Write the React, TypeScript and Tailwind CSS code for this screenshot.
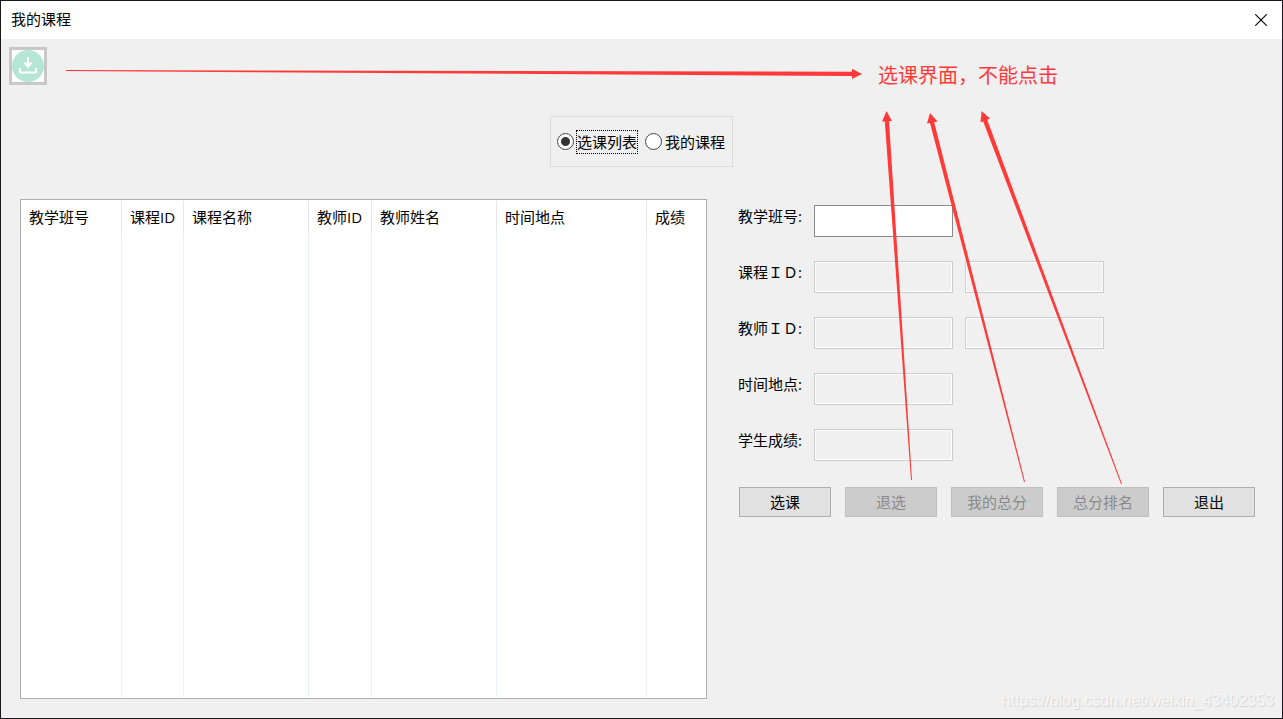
import { useState } from "react";

const columns = [
  { name: "教学班号", col: "w-[101px]" },
  { name: "课程ID", col: "w-[62px]" },
  { name: "课程名称", col: "w-[125px]" },
  { name: "教师ID", col: "w-[63px]" },
  { name: "教师姓名", col: "w-[125px]" },
  { name: "时间地点", col: "w-[150px]" },
  { name: "成绩", col: "" },
];

const fields = [
  { id: "classNo", label: "教学班号:", enabled: true },
  { id: "courseId", label: "课程ＩＤ:", extra: "课程名称" },
  { id: "teacherId", label: "教师ＩＤ:", extra: "教师姓名" },
  { id: "place", label: "时间地点:" },
  { id: "score", label: "学生成绩:" },
];

const actions = [
  { name: "选课", enabled: true },
  { name: "退选", enabled: false },
  { name: "我的总分", enabled: false },
  { name: "总分排名", enabled: false },
  { name: "退出", enabled: true },
];

const inputBase = "h-8 w-[139px] shrink-0 px-1 outline-none border ";
const inputOn = inputBase + "border-[#8a8a8a] bg-white";
const inputOff = inputBase + "border-[#cccccc] bg-[#f0f0f0] inset-ring inset-ring-white";

function TitleBar() {
  return (
    <header className="flex h-[38px] shrink-0 items-center justify-between bg-white pr-[15px] pl-[10px]">
      <h1 className="pb-0.5">我的课程</h1>
      <button type="button" aria-label="关闭" className="size-3">
        <svg viewBox="0 0 12 12" className="size-3" stroke="#000" strokeWidth="1.1">
          <path d="M0.3 0.3L11.7 11.7M11.7 0.3L0.3 11.7" />
        </svg>
      </button>
    </header>
  );
}

function ModeSwitch() {
  const [mode, setMode] = useState("选课列表");
  return (
    <div
      role="radiogroup"
      aria-label="显示内容"
      className="mx-auto mt-[31px] flex h-[51px] items-center gap-[7px] border border-[#dcdcdc] px-[6px]"
    >
      {["选课列表", "我的课程"].map((name) => (
        <label key={name} className="flex items-center gap-[2px]">
          <input
            type="radio"
            name="mode"
            checked={mode === name}
            onChange={() => setMode(name)}
            className="peer size-[17px] appearance-none rounded-full border border-[#444] bg-white checked:bg-[radial-gradient(circle,#333_4px,#fff_5px)]"
          />
          <span className="border border-dotted border-transparent leading-[22px] peer-checked:border-black">
            {name}
          </span>
        </label>
      ))}
    </div>
  );
}

function CourseTable() {
  return (
    <div className="flex min-w-0 flex-1 border border-[#adadb3] bg-white py-px">
      <table className="w-full table-fixed border-separate border-spacing-0 text-left">
        <colgroup>
          {columns.map((c) => (
            <col key={c.name} className={c.col} />
          ))}
        </colgroup>
        <thead>
          <tr>
            {columns.map((c) => (
              <th
                key={c.name}
                className="h-8 border-r border-[#e6e6e6] pl-2 font-normal whitespace-nowrap last:border-r-0"
              >
                {c.name}
              </th>
            ))}
          </tr>
        </thead>
        <tbody>
          <tr className="h-full">
            {columns.map((c) => (
              <td key={c.name} className="border-r border-[#e8f1f9] last:border-r-0" />
            ))}
          </tr>
        </tbody>
      </table>
    </div>
  );
}

function CourseForm() {
  return (
    <form className="shrink-0 pt-[6px]">
      <div className="flex flex-col gap-6">
        {fields.map((f) => (
          <div key={f.id} className="flex">
            <label htmlFor={f.id} className="w-[76px] leading-[22px]">
              {f.label}
            </label>
            <input id={f.id} disabled={!f.enabled} className={f.enabled ? inputOn : inputOff} />
            {f.extra && (
              <input aria-label={f.extra} disabled className={inputOff + " ml-3"} />
            )}
          </div>
        ))}
      </div>
      <div className="mt-[26px] flex gap-[14px] pl-px">
        {actions.map((a) => (
          <button
            key={a.name}
            type="button"
            disabled={!a.enabled}
            className="h-[30px] w-[92px] border border-[#adadad] bg-[#e1e1e1] disabled:border-[#bfbfbf] disabled:bg-[#cccccc] disabled:text-[#8a8a8a]"
          >
            {a.name}
          </button>
        ))}
      </div>
    </form>
  );
}

function Notes() {
  return (
    <div className="pointer-events-none absolute -inset-px overflow-hidden">
      <svg width="1283" height="719" viewBox="0 0 1283 719" className="absolute top-0 left-0 max-w-none" fill="#ff3a38">
        <path d="M66 70L852 71.8V68.8L862 74L852 79V76L66 71Z" />
        <path d="M911 480L884.8 121.5H882L886.5 111L892 121H889L912 480Z" />
        <path d="M1024 482L930 123L927 123.5L930 113L937.5 121.5L934.2 122.2L1025 482Z" />
        <path d="M1121 484L983.2 121.5L980.5 122.3L981.5 111L990 118.5L987.2 119.7L1122 484Z" />
      </svg>
      <p className="absolute top-16 left-[878px] text-xl leading-6 whitespace-nowrap text-[#ff3a38]">
        选课界面，不能点击
      </p>
      <p className="absolute right-[9px] bottom-2 font-['Liberation_Sans',sans-serif] text-base leading-5 text-[#f7f7f7] [text-shadow:1px_1px_1px_#d2d2d2]">
        https://blog.csdn.net/weixin_43402353
      </p>
    </div>
  );
}

export default function App() {
  return (
    <div className="relative flex min-h-screen flex-col border border-[#1a171b] bg-[#f0f0f0] font-['Open_Sans','Noto_Sans_CJK_SC',sans-serif] text-[15px] leading-[22px] text-black">
      <TitleBar />
      <main className="flex flex-1 flex-col pt-2 pb-[19px]">
        <button
          type="button"
          disabled
          aria-label="下载"
          className="ml-2 flex size-[38px] items-center justify-center border-3 border-[#c8c8c8] bg-white"
        >
          <svg viewBox="0 0 32 32" className="size-8" fill="none" stroke="#fff">
            <circle cx="16" cy="16" r="16" fill="#b5e5d5" stroke="none" />
            <path d="M16 7V14" strokeWidth="2" />
            <path d="M11 12.5H21L16 18.5Z" fill="#fff" stroke="none" />
            <path d="M8 18V22.5H24V18" strokeWidth="2" strokeLinejoin="round" />
          </svg>
        </button>
        <ModeSwitch />
        <div className="mt-8 flex flex-1 gap-[31px] pr-[27px] pl-[19px]">
          <CourseTable />
          <CourseForm />
        </div>
      </main>
      <Notes />
    </div>
  );
}
